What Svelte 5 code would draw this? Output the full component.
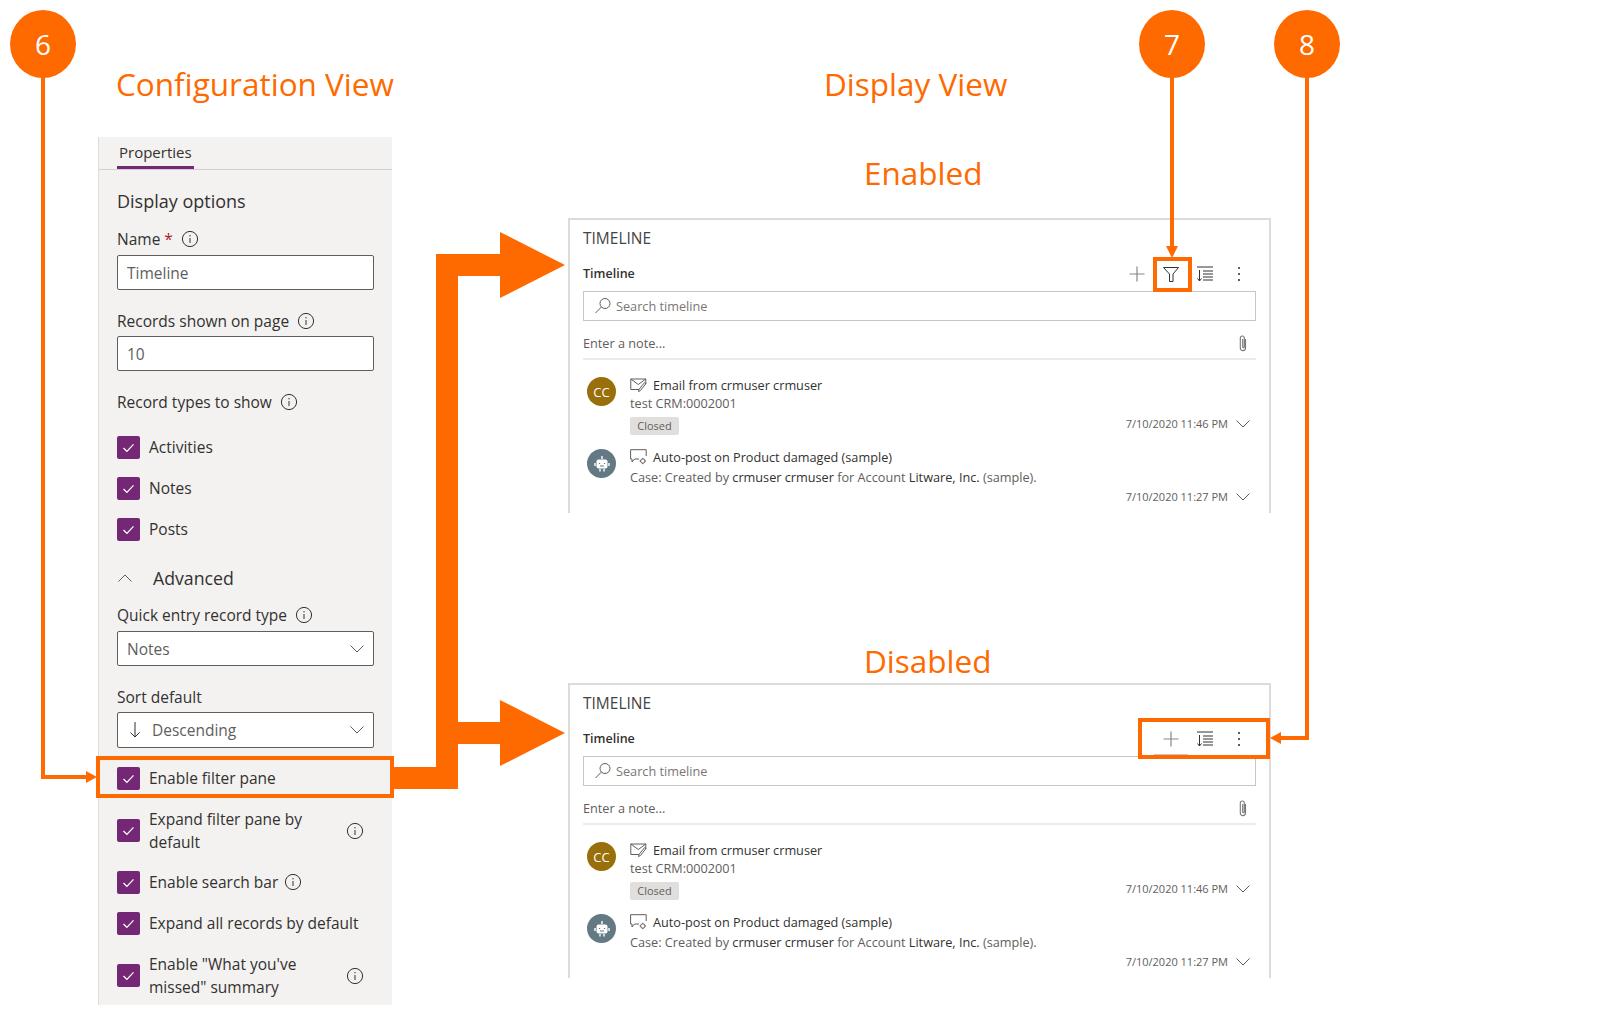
<script>
  const entries = [
    {
      kind: "mail",
      title: "Email from crmuser crmuser",
      tag: "Closed",
      date: "7/10/2020 11:46 PM",
    },
    {
      kind: "post",
      title: "Auto-post on Product damaged (sample)",
      date: "7/10/2020 11:27 PM",
    },
  ];
</script>

{#snippet info(cls = "")}
  <svg class={`info ${cls}`} width="18" height="18" viewBox="0 0 18 18">
    <circle cx="9" cy="9" r="7.6" />
    <path d="M9 8v5M9 5v1.4" />
  </svg>
{/snippet}

{#snippet check(label, hint = false)}
  <div class="check">
    <span class="box">
      <svg width="15" height="15" viewBox="0 0 15 15"><path d="M2.5 8l3.4 3.4 6.6-7" /></svg>
    </span>
    <span class="check-label" class:wrap={hint === true}>{label}</span>
    {#if hint === "inline"}
      {@render info("gap")}
    {:else if hint}
      {@render info("end")}
    {/if}
  </div>
{/snippet}

{#snippet chevron()}
  <svg class="chev" width="16" height="10" viewBox="0 0 16 10"><path d="M1.5 1.5L8 8l6.5-6.5" /></svg>
{/snippet}

{#snippet timeline(withFilter)}
  <section class="card">
    <div class="card-title">TIMELINE</div>
    <div class="toolbar">
      <span class="toolbar-name">Timeline</span>
      <div class="tools">
        <span class="tool" class:hovered={!withFilter}>
          <svg width="18" height="18" viewBox="0 0 18 18"><path d="M9 1.5v15M1.5 9h15" /></svg>
        </span>
        {#if withFilter}
          <span class="tool dark">
            <svg width="18" height="18" viewBox="0 0 18 18"><path d="M1.5 2.5h15L11 9v7.5H7.5V9z" /></svg>
          </span>
        {/if}
        <span class="tool dark">
          <svg width="18" height="18" viewBox="0 0 18 18"><path d="M1 2h16M7 6h10M7 9h10M7 12h10M7 15h10M3.5 5v11M1.5 13.5l2 2.5 2-2.5" /></svg>
        </span>
        <span class="tool dots"><i></i><i></i><i></i></span>
      </div>
    </div>
    <div class="search">
      <svg width="18" height="18" viewBox="0 0 18 18"><circle cx="11" cy="6.5" r="5" /><path d="M7.4 10L1.5 16" /></svg>
      <span>Search timeline</span>
    </div>
    <div class="note">
      <span>Enter a note...</span>
      <svg width="12" height="18" viewBox="0 0 12 18"><path d="M8.5 5v9a2.6 2.6 0 0 1-5.2 0V4a2 2 0 0 1 4 0v9a.8.8 0 0 1-1.6 0V5" /></svg>
    </div>
    {#each entries as entry}
      <div class="entry">
        {#if entry.kind === "mail"}
          <span class="avatar cc">CC</span>
        {:else}
          <span class="avatar bot">
            <svg width="16" height="18" viewBox="0 0 16 18">
              <path d="M8 1v3" stroke="#fff" stroke-width="1.4" />
              <rect x="2.5" y="4.5" width="11" height="9" rx="2" fill="#fff" />
              <path d="M1 8v3M15 8v3M6 14v2.5M10 14v2.5" stroke="#fff" stroke-width="1.4" />
              <path d="M5.5 8v1M10.5 8v1M6 11h4" stroke="#637a85" stroke-width="1.2" />
            </svg>
          </span>
        {/if}
        <div class="entry-body">
          <div class="entry-title">
            {#if entry.kind === "mail"}
              <svg width="17" height="15" viewBox="0 0 17 15"><path d="M9 11.5H.8V1h15v5M.8 1l7.5 5.5L15.8 1M16 5.5l-5.5 7-2 1 .6-2.2 5.4-6.6z" /></svg>
            {:else}
              <svg width="17" height="16" viewBox="0 0 17 16"><path d="M9 10H4.5L2 13v-3H.6V.7h15.6V7" /><circle cx="12.8" cy="12" r="2.2" /><path d="M12.8 8.8v1M12.8 14.2v1M9.6 12h1M15 12h1" /></svg>
            {/if}
            <span>{entry.title}</span>
          </div>
          <div class="entry-detail">
            {#if entry.kind === "mail"}
              test CRM:0002001
            {:else}
              Case: Created by <b>crmuser crmuser</b> for Account <b>Litware, Inc.</b> (sample).
            {/if}
          </div>
          <div class="entry-foot">
            {#if entry.tag}<span class="tag">{entry.tag}</span>{/if}
            <span class="date">{entry.date}{@render chevron()}</span>
          </div>
        </div>
      </div>
    {/each}
  </section>
{/snippet}

<main class="page">
  <div class="config">
    <h2 class="view-title config-title">Configuration View</h2>
    <aside class="panel">
      <div class="tabs"><span class="tab">Properties</span></div>
      <h3 class="section">Display options</h3>

      <div class="label m-name">Name <em>*</em>{@render info()}</div>
      <div class="input">Timeline</div>

      <div class="label">Records shown on page{@render info()}</div>
      <div class="input">10</div>

      <div class="label">Record types to show{@render info()}</div>
      <div class="checks first">
        {@render check("Activities")}
        {@render check("Notes")}
        {@render check("Posts")}
      </div>

      <div class="advanced">
        <svg width="16" height="10" viewBox="0 0 16 10"><path d="M1.5 8.5L8 2l6.5 6.5" /></svg>
        <span>Advanced</span>
      </div>

      <div class="label quick">Quick entry record type{@render info()}</div>
      <div class="input select">Notes{@render chevron()}</div>

      <div class="label">Sort default</div>
      <div class="input select tall">
        <span class="sorted">
          <svg width="12" height="20" viewBox="0 0 12 20"><path d="M6 2v15M1.5 12.5L6 17l4.5-4.5" /></svg>
          Descending
        </span>
        {@render chevron()}
      </div>

      <div class="options">
        {@render check("Enable filter pane")}
        {@render check("Expand filter pane by default", true)}
        {@render check("Enable search bar", "inline")}
        {@render check("Expand all records by default")}
        {@render check('Enable "What you\'ve missed" summary', true)}
      </div>
    </aside>
  </div>

  <div class="display">
    <h2 class="view-title display-title">Display View</h2>
    <h2 class="view-title state-title enabled">Enabled</h2>
    {@render timeline(true)}
    <h2 class="view-title state-title disabled">Disabled</h2>
    {@render timeline(false)}
  </div>

  <!-- callouts drawn over the screenshots -->
  <svg class="callouts" width="1624" height="1024" viewBox="0 0 1624 1024">
    <g class="thin">
      <path d="M43 70V777H88" />
      <path d="M1172 70V248" />
      <path d="M1307 70V738H1278" />
    </g>
    <path class="fill" d="M97 777L86 771V783zM1172 258L1166 246H1178zM1270 738L1281 732V744z" />
    <path class="fill" d="M392 767H436V254H500V232L565 265L500 298V276H458V722H500V700L565 733L500 766V744H458V789H392z" />
    <g class="frame">
      <rect x="98" y="758" width="294" height="38" />
      <rect x="1155" y="259" width="35" height="31" />
      <rect x="1140" y="720" width="128" height="37" />
    </g>
  </svg>

  <span class="badge six">6</span>
  <span class="badge seven">7</span>
  <span class="badge eight">8</span>
</main>

<style>
  :global(body) {
    margin: 0;
    background: #fff;
  }

  .page {
    position: relative;
    display: flex;
    width: 1624px;
    height: 1024px;
    overflow: hidden;
    font-family: "Open Sans", "Noto Sans", sans-serif;
    color: #323130;
  }

  .view-title {
    margin: 0;
    font-size: 31.5px;
    line-height: 44px;
    font-weight: 400;
    color: #ff6a00;
    white-space: nowrap;
  }

  .config {
    width: 294px;
    margin-left: 98px;
    padding-top: 62px;
  }

  .config-title {
    padding-left: 18px;
  }

  .panel {
    margin-top: 31px;
    height: 868px;
    box-sizing: border-box;
    padding: 0 18px 0 18px;
    background: #f3f2f1;
    border-left: 1px solid #dedcda;
    font-size: 15.5px;
    line-height: 22px;
  }

  .tabs {
    height: 32px;
    margin: 0 -18px;
    padding-left: 18px;
    border-bottom: 1px solid #d2d0ce;
  }

  .tab {
    display: inline-block;
    box-sizing: border-box;
    height: 32px;
    padding: 4px 2px 0;
    border-bottom: 3px solid #742774;
    font-size: 15px;
  }

  .section {
    margin: 19px 0 0;
    font-size: 18px;
    line-height: 24px;
    font-weight: 500;
  }

  .label {
    display: flex;
    align-items: center;
    margin-top: 20px;
    margin-bottom: 4px;
  }

  .label em {
    margin-left: 4px;
    color: #a4262c;
    font-style: normal;
  }

  .m-name {
    margin-top: 15px;
    margin-bottom: 5px;
  }

  .quick {
    margin-top: 14px;
    margin-bottom: 5px;
  }

  .info {
    flex: none;
    margin-left: 8px;
    fill: none;
    stroke: #323130;
    stroke-width: 1;
  }

  .info.gap {
    margin-left: 6px;
  }

  .info.end {
    margin-left: auto;
    margin-right: 10px;
  }

  .input {
    box-sizing: border-box;
    display: flex;
    align-items: center;
    justify-content: space-between;
    width: 257px;
    height: 35px;
    padding: 0 8px 0 9px;
    background: #fff;
    border: 1px solid #605e5c;
    border-radius: 2px;
    color: #605e5c;
  }

  .tall {
    height: 36px;
  }

  .sorted {
    display: flex;
    align-items: center;
    gap: 11px;
    padding-left: 2px;
  }

  .sorted svg {
    fill: none;
    stroke: #323130;
    stroke-width: 1;
  }

  .chev {
    fill: none;
    stroke: #605e5c;
    stroke-width: 1;
  }

  .checks.first {
    margin-top: 22px;
  }

  .check {
    display: flex;
    align-items: center;
    min-height: 24px;
    margin-top: 17px;
  }

  .checks .check:first-child {
    margin-top: 0;
  }

  .box {
    flex: none;
    display: flex;
    align-items: center;
    justify-content: center;
    width: 23px;
    height: 23px;
    margin-right: 9px;
    background: #742774;
    border-radius: 2px;
  }

  .box svg {
    fill: none;
    stroke: #fff;
    stroke-width: 1.3;
  }

  .check-label {
    font-size: 15.5px;
    line-height: 22.5px;
  }

  .check-label.wrap {
    max-width: 178px;
  }

  .options {
    margin-top: 18px;
  }

  .options .check {
    margin-top: 18px;
  }

  .options .check:first-child {
    margin-top: 0;
  }

  .options .check:nth-child(3) {
    margin-top: 17px;
  }

  .options .check:nth-child(4) {
    margin-top: 17px;
  }

  .advanced {
    display: flex;
    align-items: center;
    height: 24px;
    margin-top: 25px;
    font-size: 17.7px;
    font-weight: 500;
  }

  .advanced svg {
    margin-right: 20px;
    fill: none;
    stroke: #605e5c;
    stroke-width: 1;
  }

  .display {
    width: 703px;
    margin-left: 176px;
    padding-top: 62px;
  }

  .display-title {
    margin-left: 256px;
  }

  .state-title {
    margin-left: 296px;
  }

  .enabled {
    margin-top: 45px;
    margin-bottom: 23px;
  }

  .disabled {
    margin-top: 126px;
  }

  .card {
    box-sizing: border-box;
    height: 295px;
    padding: 6px 13px 0;
    border: 2px solid #dcdbda;
    border-bottom: 0;
    font-size: 12.7px;
  }

  .card-title {
    font-size: 15.5px;
    line-height: 24px;
    color: #444;
  }

  .toolbar {
    display: flex;
    align-items: center;
    justify-content: space-between;
    height: 32px;
    margin-top: 8px;
  }

  .toolbar-name {
    padding-bottom: 2px;
    font-weight: 600;
    font-size: 12.5px;
  }

  .tools {
    display: flex;
  }

  .tool {
    display: flex;
    align-items: center;
    justify-content: center;
    width: 34px;
    height: 32px;
  }

  .tool svg {
    fill: none;
    stroke: #8a8886;
    stroke-width: 1.2;
  }

  .tool.dark svg {
    stroke: #323130;
    stroke-width: 1;
  }

  .tool.hovered {
    box-shadow: inset 0 -1px 0 #c8c6c4;
  }

  .dots {
    flex-direction: column;
    gap: 4px;
  }

  .dots i {
    width: 2px;
    height: 2px;
    background: #605e5c;
  }

  .search {
    display: flex;
    align-items: center;
    gap: 4px;
    box-sizing: border-box;
    height: 30px;
    margin-top: 1px;
    padding-left: 10px;
    border: 1px solid #c8c6c4;
    color: #797775;
  }

  .search svg {
    fill: none;
    stroke: #605e5c;
    stroke-width: 1;
  }

  .note {
    display: flex;
    align-items: center;
    justify-content: space-between;
    box-sizing: border-box;
    height: 39px;
    padding: 6px 7px 0 0;
    border-bottom: 2px solid #edebe9;
    color: #605e5c;
  }

  .note svg {
    fill: none;
    stroke: #797775;
    stroke-width: 1.1;
  }

  .entry {
    display: flex;
    margin-top: 13px;
  }

  .note + .entry {
    margin-top: 16px;
  }

  .entry + .entry .entry-detail {
    margin-top: 2px;
  }

  .entry + .entry .entry-foot {
    margin-top: 3px;
  }

  .avatar {
    flex: none;
    display: flex;
    align-items: center;
    justify-content: center;
    width: 29px;
    height: 29px;
    margin: 1px 14px 0 4px;
    border-radius: 50%;
    color: #fff;
    font-size: 13px;
  }

  .cc {
    background: #986f0b;
  }

  .bot {
    background: #637a85;
  }

  .bot svg {
    fill: none;
  }

  .entry-body {
    flex: 1;
    padding-right: 5px;
    line-height: 18px;
    color: #605e5c;
  }

  .entry-title {
    display: flex;
    align-items: center;
    gap: 6px;
    height: 18px;
    color: #323130;
    font-weight: 500;
  }

  .entry-title svg {
    fill: none;
    stroke: #605e5c;
    stroke-width: 1;
  }

  .entry-detail {
    height: 19px;
  }

  .entry-detail b {
    font-weight: 500;
    color: #323130;
  }

  .entry-foot {
    display: flex;
    align-items: flex-start;
    justify-content: flex-end;
    height: 18px;
    margin-top: 4px;
  }

  .tag {
    margin-right: auto;
    width: 49px;
    height: 18px;
    background: #e1dfdd;
    border-radius: 2px;
    text-align: center;
    font-size: 11px;
    color: #605e5c;
  }

  .date {
    display: flex;
    align-items: center;
    gap: 7px;
    line-height: 14px;
    font-size: 11px;
  }

  .callouts {
    position: absolute;
    inset: 0;
    pointer-events: none;
  }

  .thin {
    fill: none;
    stroke: #ff6a00;
    stroke-width: 4;
  }

  .fill {
    fill: #ff6a00;
  }

  .frame {
    fill: none;
    stroke: #ff6a00;
    stroke-width: 4;
  }

  .badge {
    position: absolute;
    top: 10px;
    display: flex;
    align-items: center;
    justify-content: center;
    width: 66px;
    height: 68px;
    border-radius: 50%;
    background: #ff6a00;
    color: #fff;
    font-size: 28px;
  }

  .six {
    left: 10px;
  }

  .seven {
    left: 1139px;
  }

  .eight {
    left: 1274px;
  }
</style>
